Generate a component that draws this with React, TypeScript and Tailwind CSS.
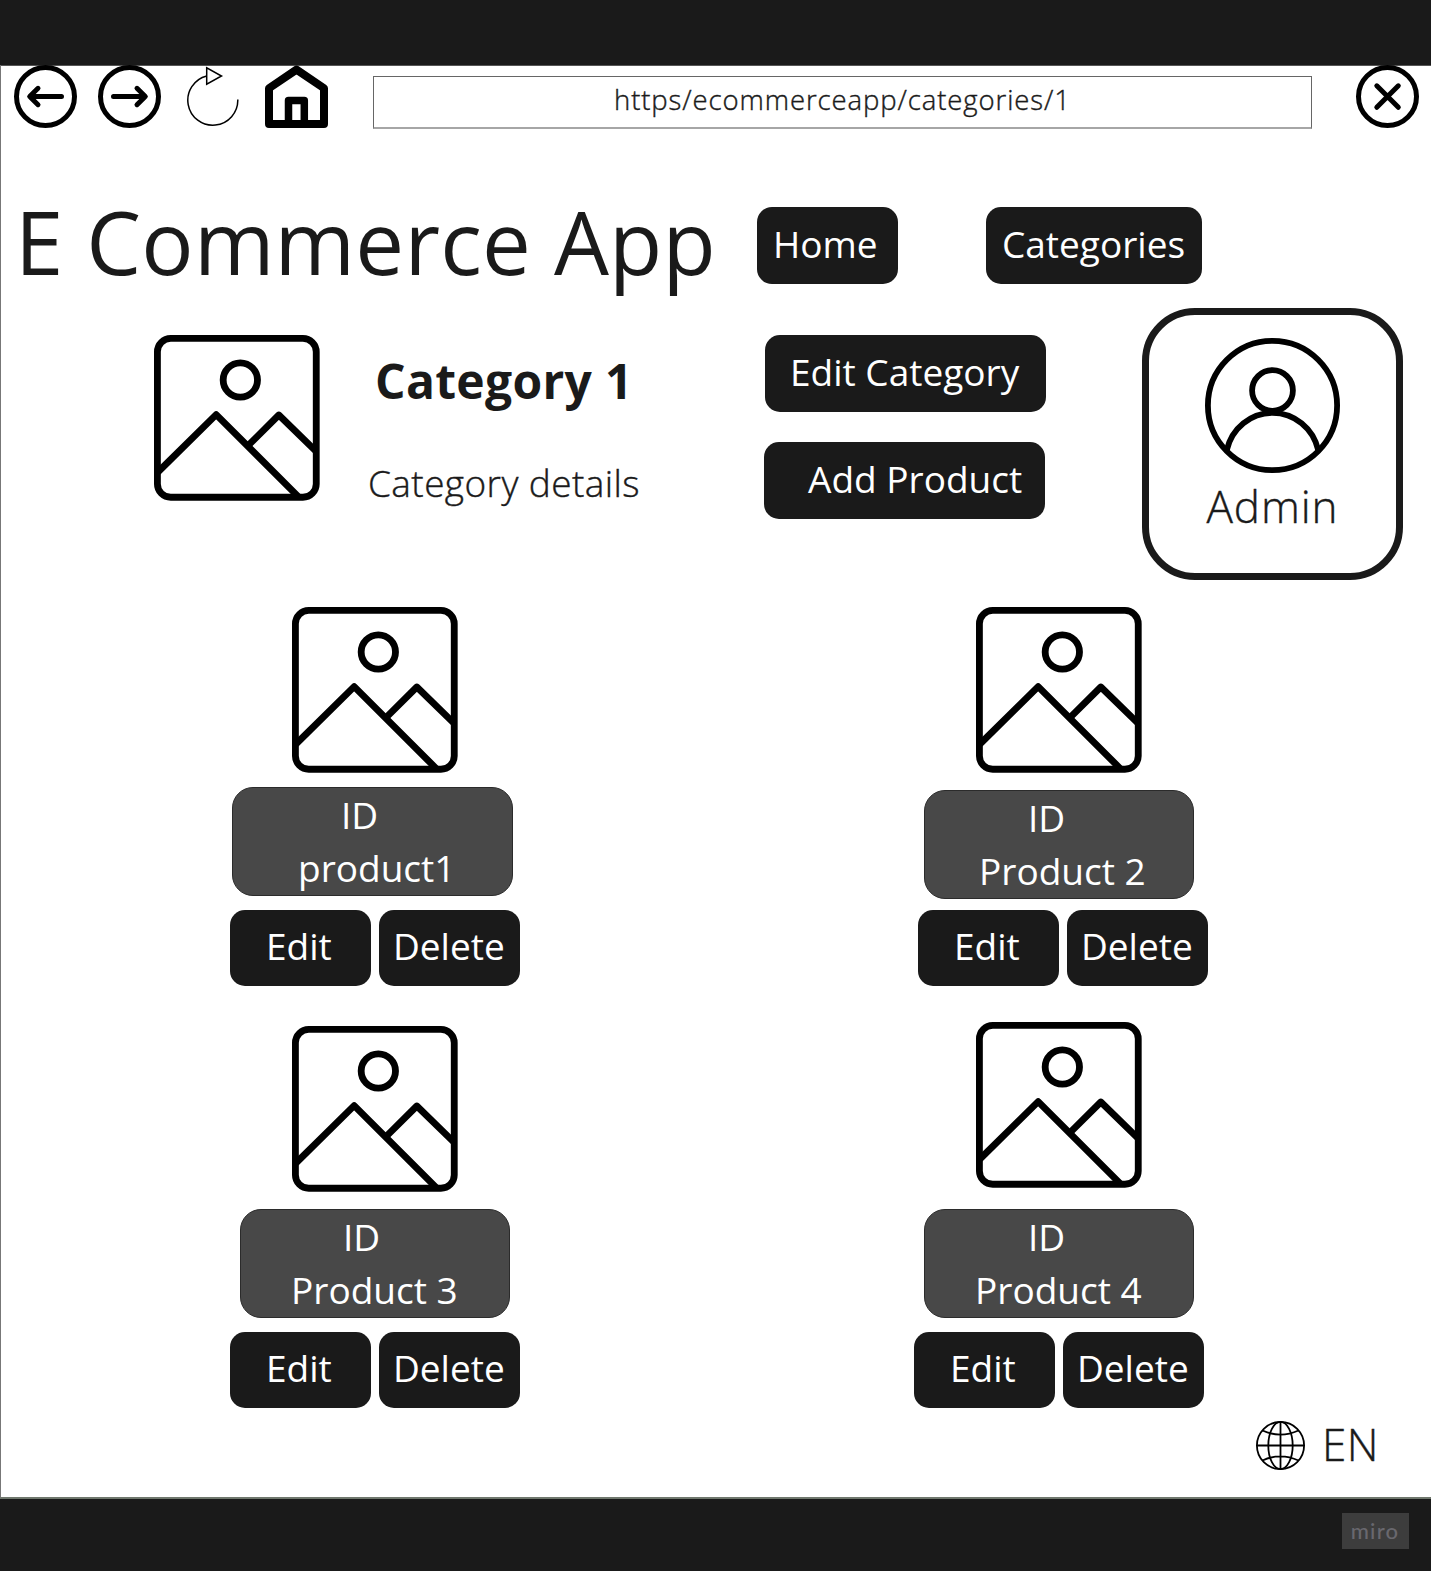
import type { ReactNode } from "react";

function PictureIcon() {
  return (
    <svg viewBox="0 0 498 498" className="block size-[166px] shrink-0" fill="none" stroke="#000" strokeWidth="20.5">
      <rect x="10.25" y="10.25" width="476.5" height="476.5" rx="40" />
      <circle cx="259" cy="135" r="51.5" />
      <path d="M12 411 186.5 239 432 484" strokeLinejoin="round" />
      <path d="M282 332 374.5 240 484 347" strokeLinejoin="round" />
    </svg>
  );
}

function BackIcon() {
  return (
    <svg viewBox="0 0 63 63" className="block size-[63px] shrink-0" fill="none" stroke="#000" strokeWidth="5" strokeLinecap="round" strokeLinejoin="round">
      <circle cx="31.5" cy="31.5" r="29" />
      <path d="M47.5 31.5H16M24 23.3 15.7 31.5 24 39.7" />
    </svg>
  );
}

function ForwardIcon() {
  return (
    <svg viewBox="0 0 63 63" className="block size-[63px] shrink-0" fill="none" stroke="#000" strokeWidth="5" strokeLinecap="round" strokeLinejoin="round">
      <circle cx="31.5" cy="31.5" r="29" />
      <path d="M15.5 31.5H47M39 23.3 47.3 31.5 39 39.7" />
    </svg>
  );
}

function CloseIcon() {
  return (
    <svg viewBox="0 0 63 63" className="block size-[63px] shrink-0" fill="none" stroke="#000" strokeWidth="5" strokeLinecap="round">
      <circle cx="31.5" cy="31.5" r="29" />
      <path d="M20.8 20.8 42.3 42.3M42.3 20.8 20.8 42.3" />
    </svg>
  );
}

function ReloadIcon() {
  return (
    <svg viewBox="0 0 52 63" className="block h-[63px] w-[52px] shrink-0" fill="none" stroke="#000" strokeWidth="1.5">
      <path d="M50.8 34.5A25 25 0 1 1 19.7 11" />
      <path d="M19.7 2.8V19.2L34.5 11Z" />
    </svg>
  );
}

function HomeIcon() {
  return (
    <svg viewBox="0 0 63 63" className="block size-[63px] shrink-0" fill="none" stroke="#000" strokeLinejoin="round">
      <path d="M4 59V23.3L31.5 4.6 59 23.3V59Z" strokeWidth="8" />
      <path d="M23.5 59V35.5H39.3V59" strokeWidth="7.5" />
    </svg>
  );
}

function AvatarIcon() {
  return (
    <svg viewBox="0 0 135 135" className="block size-[135px]" fill="none" stroke="#000" strokeWidth="5.8">
      <circle cx="67.5" cy="67.5" r="64.6" />
      <circle cx="67.5" cy="52.5" r="20.4" />
      <path d="M21.8 112A47 48.5 0 0 1 113.2 112" />
    </svg>
  );
}

function GlobeIcon() {
  return (
    <svg viewBox="0 0 49 49" className="block size-[49px] shrink-0" fill="none" stroke="#000" strokeWidth="1.8">
      <circle cx="24.5" cy="24.5" r="23.6" />
      <ellipse cx="24.5" cy="24.5" rx="12.2" ry="23.6" />
      <path d="M24.5 1V48M1 24.5H48M6.5 9.5Q24.5 17.8 42.5 9.5M6.5 39.5Q24.5 31.2 42.5 39.5" />
    </svg>
  );
}

function Button({ className, children }: { className: string; children: ReactNode }) {
  return (
    <button
      className={
        "flex shrink-0 items-center whitespace-nowrap rounded-[15px] bg-[#1a1a1a] pb-1 text-left text-[37px] text-white " +
        className
      }
    >
      {children}
    </button>
  );
}

type Product = {
  name: string;
  image: string;
  box: string;
  id: string;
  label: string;
  actions: string;
};

const leftProducts: Product[] = [
  {
    name: "product1",
    image: "ml-[62px]",
    box: "mt-[14px] ml-[2px] w-[281px]",
    id: "pl-[108px]",
    label: "pl-[65px]",
    actions: "mt-[14px]",
  },
  {
    name: "Product 3",
    image: "ml-[62px] mt-10",
    box: "mt-[17px] ml-[10px] w-[270px]",
    id: "pl-[102px]",
    label: "pl-[50px]",
    actions: "mt-[14px]",
  },
];

const rightProducts: Product[] = [
  {
    name: "Product 2",
    image: "ml-[62px]",
    box: "mt-[17px] ml-[10px] w-[270px]",
    id: "pl-[103px]",
    label: "pl-[54px]",
    actions: "mt-[11px] ml-1",
  },
  {
    name: "Product 4",
    image: "ml-[62px] mt-9",
    box: "mt-[21px] ml-[10px] w-[270px]",
    id: "pl-[103px]",
    label: "pl-[50px]",
    actions: "mt-[14px]",
  },
];

function ProductColumn({ products, className }: { products: Product[]; className: string }) {
  return (
    <div className={"flex flex-col items-start " + className}>
      {products.map((p) => (
        <article key={p.name} className="flex flex-col items-start">
          <div className={p.image}>
            <PictureIcon />
          </div>
          <div
            className={
              "flex h-[109px] flex-col whitespace-nowrap rounded-[21px] border border-[#2b2b2b] bg-[#484848] pt-px text-[37px] leading-[52.5px] text-white " +
              p.box
            }
          >
            <span className={p.id}>ID</span>
            <span className={p.label}>{p.name}</span>
          </div>
          <div className={"flex gap-2 " + p.actions}>
            <Button className="h-[76px] w-[141px] pl-[36px]">Edit</Button>
            <Button className="h-[76px] w-[141px] pl-[14px]">Delete</Button>
          </div>
        </article>
      ))}
    </div>
  );
}

export default function App() {
  return (
    <div className="flex h-[1571px] w-[1431px] flex-col overflow-hidden bg-[#1a1a1a] font-['Open_Sans',sans-serif] text-[#1a1a1a]">
      <div className="h-[65px] shrink-0" />
      <main className="flex h-[1434px] shrink-0 flex-col border-b-2 border-l border-b-[#6f776d] border-l-[#777] bg-white shadow-[inset_0_1px_0_#555]">
        <header className="flex h-[64px] shrink-0 items-start pl-[13px]">
          <BackIcon />
          <div className="ml-[21px]"><ForwardIcon /></div>
          <div className="ml-[26px]"><ReloadIcon /></div>
          <div className="ml-[26px]"><HomeIcon /></div>
          <div className="mt-[11px] ml-[45px] h-[53px] w-[939px] shrink-0 whitespace-nowrap border border-b-2 border-[#666] border-b-[#a6a6a6] pl-[240px] text-[27.5px] font-light leading-[46px] tracking-[0.9px] [-webkit-text-stroke:0.4px_#1a1a1a]">
            https/ecommerceapp/categories/1
          </div>
          <div className="ml-[44px]"><CloseIcon /></div>
        </header>

        <nav className="mt-[78px] flex h-[77px] shrink-0 items-start">
          <h1 className="w-[756px] whitespace-nowrap pl-[14px] text-[87px] leading-[69px] tracking-[0.2px]">E Commerce App</h1>
          <Button className="h-[77px] w-[141px] pl-[16px]">Home</Button>
          <Button className="ml-[88px] h-[77px] w-[216px] pl-[16px]">Categories</Button>
        </nav>

        <section className="mt-[24px] flex h-[272px] shrink-0 items-start">
          <div className="mt-[27px] ml-[153px]"><PictureIcon /></div>
          <div className="mt-[27px] ml-[48px] flex w-[396px] flex-col whitespace-nowrap">
            <h2 className="pl-[7px] text-[48px] font-bold leading-[92px] tracking-[0.3px]">Category 1</h2>
            <p className="mt-[26px] text-[37px] font-light leading-[60px] tracking-[0.4px] [-webkit-text-stroke:0.4px_#1a1a1a]">Category details</p>
          </div>
          <div className="mt-[27px] flex w-[283px] flex-col gap-[30px]">
            <Button className="ml-px h-[77px] w-[281px] pl-[25px]">Edit Category</Button>
            <Button className="h-[77px] w-[281px] pl-[44px]">Add Product</Button>
          </div>
          <div className="ml-[95px] flex h-[272px] w-[261px] flex-col items-center rounded-[53px] border-[7px] border-[#1a1a1a] pt-[23px]">
            <AvatarIcon />
            <span className="text-[44px] font-light leading-[66px] tracking-[0.9px] [-webkit-text-stroke:0.4px_#1a1a1a]">Admin</span>
          </div>
        </section>

        <section className="mt-[27px] flex h-[802px] shrink-0 items-start">
          <ProductColumn products={leftProducts} className="ml-[229px] w-[684px]" />
          <ProductColumn products={rightProducts} className="" />
        </section>

        <footer className="mt-[12px] flex h-[49px] shrink-0 items-center">
          <div className="ml-[1255px]"><GlobeIcon /></div>
          <span className="ml-[17px] pb-[4px] text-[44px] font-light leading-[46px] tracking-[0.5px] [-webkit-text-stroke:0.4px_#1a1a1a]">EN</span>
        </footer>
      </main>
      <div className="mt-[14px] ml-[1342px] flex h-[36px] w-[67px] shrink-0 items-center justify-center bg-[#3d3d3d] pr-px pb-[2px] font-['Lato',sans-serif] text-[22px] font-medium tracking-[1.2px] text-[#69686e]">
        miro
      </div>
    </div>
  );
}
